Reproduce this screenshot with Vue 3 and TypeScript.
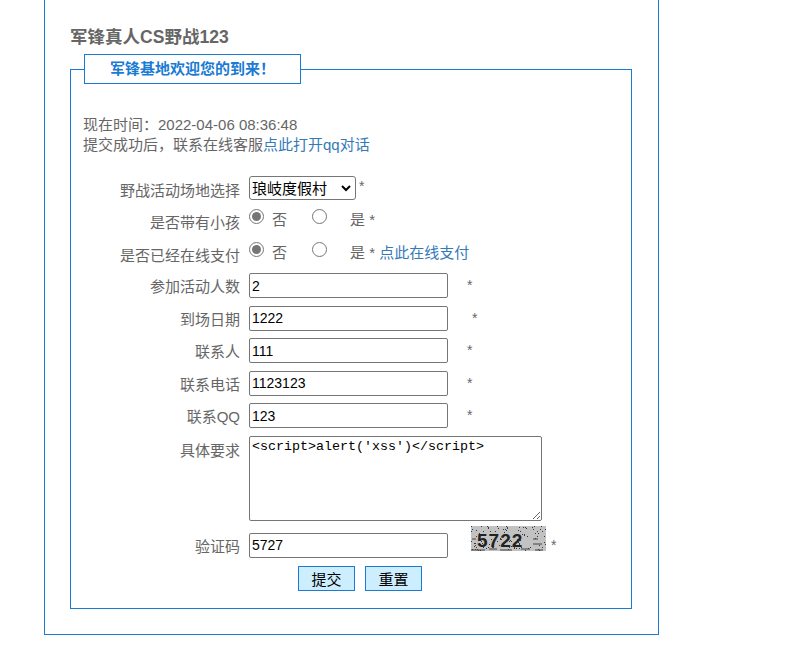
<template>
  <div class="outer">
    <h3 class="title">军锋真人CS野战123</h3>
    <fieldset class="box">
      <legend>军锋基地欢迎您的到来！</legend>
      <div class="intro">
        现在时间：2022-04-06 08:36:48<br />
        提交成功后，联系在线客服<a href="#">点此打开qq对话</a>
      </div>
      <form class="form" @submit.prevent>
        <div class="row row-select">
          <label class="lbl">野战活动场地选择</label>
          <div class="ctl">
            <div class="sel-wrap">
              <select class="sel"><option>琅岐度假村</option></select>
              <svg class="chev" width="10" height="7" viewBox="0 0 10 7">
                <path d="M1 1l4 4 4-4" fill="none" stroke="#000" stroke-width="2" />
              </svg>
            </div>
            <span class="star star-sel">*</span>
          </div>
        </div>
        <div class="row row-radio">
          <label class="lbl">是否带有小孩</label>
          <div class="ctl">
            <input type="radio" name="kid" checked class="rd" /><span class="no">否</span>
            <input type="radio" name="kid" class="rd" /><span class="yes">是 *</span>
          </div>
        </div>
        <div class="row row-radio">
          <label class="lbl">是否已经在线支付</label>
          <div class="ctl">
            <input type="radio" name="paid" checked class="rd" /><span class="no">否</span>
            <input type="radio" name="paid" class="rd" /><span class="yes">是 * <a href="#">点此在线支付</a></span>
          </div>
        </div>
        <div v-for="f in fields" :key="f.label" class="row row-input">
          <label class="lbl">{{ f.label }}</label>
          <div class="ctl">
            <input class="txt" type="text" :value="f.value" />
            <span class="star" :class="{ wide: f.wide }">*</span>
          </div>
        </div>
        <div class="row row-area">
          <label class="lbl">具体要求</label>
          <div class="ctl">
            <textarea class="area" :value="memo"></textarea>
          </div>
        </div>
        <div class="row row-code">
          <label class="lbl">验证码</label>
          <div class="ctl">
            <input class="txt" type="text" value="5727" />
            <svg class="captcha" width="75" height="25" viewBox="0 0 75 25">
              <rect width="75" height="25" fill="#c2c2c2" />
              <rect v-for="(d, i) in dots" :key="i" :x="d[0]" :y="d[1]" width="1" height="1" fill="#3a3a3a" />
              <text x="6" y="21" class="captcha-text">5722</text>
              <path d="M1 13h4M0 24h14M18 23h8M29 24h12M50 23h9M62 13h5M62 18h9M64 24h8" stroke="#444" stroke-width="1" fill="none" />
            </svg>
            <span class="star star-code">*</span>
          </div>
        </div>
        <div class="actions">
          <button type="button" class="btn">提交</button>
          <button type="button" class="btn">重置</button>
        </div>
      </form>
    </fieldset>
  </div>
</template>

<script setup lang="ts">
const fields = [
  { label: '参加活动人数', value: '2', wide: false },
  { label: '到场日期', value: '1222', wide: true },
  { label: '联系人', value: '111', wide: false },
  { label: '联系电话', value: '1123123', wide: false },
  { label: '联系QQ', value: '123', wide: false },
]

const memo = "<script>alert('xss')<\/script>"

// captcha noise, fixed seed so it stays the same every load
const dots: number[][] = []
let seed = 7
for (let i = 0; i < 110; i++) {
  seed = (seed * 137 + 59) % 1009
  const x = seed % 75
  seed = (seed * 137 + 59) % 1009
  dots.push([x, seed % 25])
}
</script>

<style>
html, body {
  background: #fff;
}
</style>

<style scoped>
.outer {
  box-sizing: border-box;
  width: 615px;
  height: 635px;
  margin-left: 44px;
  padding: 27px 26px 0 25px;
  border: 1px solid #1a7bd4;
  border-top: none;
  font-family: "Liberation Sans", "Noto Sans CJK SC", sans-serif;
  font-size: 15px;
  color: #666;
}

.title {
  margin: 0;
  font-size: 17.55px;
  line-height: 20px;
  font-weight: bold;
  color: #666;
}

.box {
  box-sizing: border-box;
  height: 555px;
  margin: 7px 0 0;
  padding: 0 12px;
  min-width: 0;
  border: 1px solid #1a7bd4;
}

legend {
  box-sizing: border-box;
  width: 217px;
  height: 30px;
  margin: 0 auto 0 1px;
  padding: 0;
  border: 1px solid #1a7bd4;
  background: #fff;
  color: #1a7bd4;
  font-size: 15px;
  font-weight: bold;
  line-height: 28px;
  text-align: center;
}

.intro {
  margin-top: 31px;
  line-height: 20px;
}

a {
  color: #337ab7;
  text-decoration: none;
}

.form {
  margin-top: 21px;
  margin-left: -4px;
}

.row {
  display: flex;
}

.lbl {
  flex: 0 0 170px;
  padding-right: 9px;
  box-sizing: border-box;
  text-align: right;
  line-height: 20px;
}

.ctl {
  display: flex;
  align-items: flex-start;
}

.row-select {
  height: 32px;
}

.row-select .lbl {
  padding-top: 5px;
}

.sel-wrap {
  position: relative;
  height: 24px;
}

.sel {
  box-sizing: border-box;
  display: block;
  width: 107px;
  height: 24px;
  padding: 0 0 0 2px;
  border: 1px solid #767676;
  border-radius: 3px;
  appearance: none;
  background: #fff;
  color: #000;
  font: 15px "Liberation Sans", "Noto Sans CJK SC", sans-serif;
}

.chev {
  position: absolute;
  right: 5px;
  top: 9px;
  pointer-events: none;
}

.star {
  margin-left: 19px;
  font-size: 14px;
  line-height: 25px;
}

.star.wide {
  margin-left: 24px;
}

.star-sel {
  margin-left: 3px;
  line-height: 20px;
}

.row-radio {
  height: 32.5px;
}

.row-radio .lbl {
  padding-top: 5px;
}

.rd {
  width: 15px;
  height: 15px;
  margin: 1px 0 0;
  accent-color: #767676;
}

.no {
  width: 40px;
  margin-left: 8px;
  padding-top: 2px;
  line-height: 20px;
}

.yes {
  margin-left: 23px;
  padding-top: 2px;
  line-height: 20px;
  white-space: nowrap;
}

.row-input {
  height: 32.5px;
}

.row-input .lbl,
.row-code .lbl {
  padding-top: 4px;
}

.txt {
  box-sizing: border-box;
  width: 199px;
  height: 25px;
  padding: 1px 2px;
  border: 1px solid #767676;
  border-radius: 2px;
  background: #fff;
  color: #000;
  font: 14px "Liberation Sans", "Noto Sans CJK SC", sans-serif;
}

.row-area {
  height: 97px;
}

.row-area .lbl {
  padding-top: 5px;
}

.area {
  box-sizing: border-box;
  display: block;
  width: 293px;
  height: 85px;
  margin: 0;
  padding: 2px;
  border: 1px solid #767676;
  border-radius: 2px;
  color: #000;
  font: 13.33px "Liberation Mono", monospace;
}

.row-code {
  height: 33px;
}

.captcha {
  display: block;
  margin: -7px 0 0 23px;
}

.captcha-text {
  font: bold 19px "Liberation Sans", sans-serif;
  letter-spacing: 1px;
  fill: #222;
}

.star-code {
  margin-left: 5px;
}

.actions {
  display: flex;
  gap: 10px;
  padding-left: 219px;
}

.btn {
  box-sizing: border-box;
  width: 57px;
  height: 25px;
  padding: 0;
  border: 1px solid #1a7bd4;
  background: #cdeeff;
  color: #000;
  font: 15px "Liberation Sans", "Noto Sans CJK SC", sans-serif;
}
</style>
